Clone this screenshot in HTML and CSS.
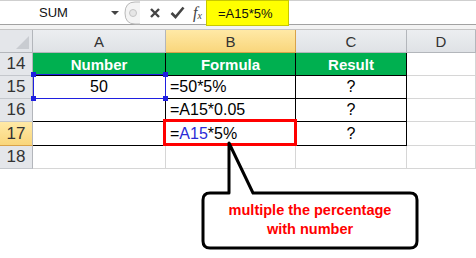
FILE: index.html
```html
<!DOCTYPE html>
<html lang="en">
<head>
<meta charset="UTF-8" />
<title>Percentage formula</title>
<link rel="stylesheet" href="styles.css">
</head>
<body>
<div class="fbar">
  <div class="namebox">
    <span class="name">SUM</span>
    <span class="dd"></span>
  </div>
  <div class="grip">
    <svg width="18" height="24" viewBox="0 0 18 24">
      <path d="M17 1 H12 Q2 1 2 12 Q2 23 12 23 H17" fill="#f4f4f4" stroke="#b9b9b9" />
      <circle cx="10" cy="12" r="3.5" fill="#e6e6e6" stroke="#c4c4c4" />
    </svg>
  </div>
  <div class="btns">
    <svg width="12" height="12" viewBox="0 0 12 12"><path d="M2 2 L10 10 M10 2 L2 10" stroke="#444" stroke-width="2.4" /></svg>
    <svg width="15" height="13" viewBox="0 0 15 13"><path d="M1.5 7 L5.5 11 L13.5 1.5" fill="none" stroke="#444" stroke-width="2.6" /></svg>
    <span class="fx">f<sub>x</sub></span>
  </div>
  <div class="finput">
    <span class="hl">=A15*5%</span>
  </div>
</div>
<div class="strip"></div>

<div class="sheet">
  <div class="corner"><span class="tri"></span></div>
  <div class="ch">A</div>
  <div class="ch on">B</div>
  <div class="ch">C</div>
  <div class="ch">D</div>

  <div class="rh">14</div>
  <div class="c t head">Number</div>
  <div class="c t head">Formula</div>
  <div class="c t head">Result</div>
  <div class="c"></div>

  <div class="rh">15</div>
  <div class="c t mid pick">50<span class="selbox"><i class="k1"></i><i class="k2"></i><i class="k3"></i><i class="k4"></i></span></div>
  <div class="c t">=50*5%</div>
  <div class="c t mid">?</div>
  <div class="c"></div>

  <div class="rh">16</div>
  <div class="c t"></div>
  <div class="c t">=A15*0.05</div>
  <div class="c t mid">?</div>
  <div class="c"></div>

  <div class="rh on">17</div>
  <div class="c t"></div>
  <div class="c t pick">=<span class="ref">A15</span>*5%<span class="redbox"></span></div>
  <div class="c t mid">?</div>
  <div class="c"></div>

  <div class="rh">18</div>
  <div class="c"></div>
  <div class="c"></div>
  <div class="c"></div>
  <div class="c"></div>
</div>

<div class="callout">
  <svg class="bubble" width="220" height="110" viewBox="0 0 220 110">
    <path d="M28 2 L52 52 H209 Q216 52 216 59 V100 Q216 107 209 107 H9 Q2 107 2 100 V59 Q2 52 9 52 H28 Z" fill="#fff" stroke="#000" stroke-width="3" stroke-linejoin="round" />
  </svg>
  <p class="note">multiple the percentage<br>with number</p>
</div>
</body>
</html>
```

FILE: styles.css
```css
html, body {
margin: 0;
padding: 0;
}

body {
width: 476px;
height: 258px;
overflow: hidden;
background: #fff;
font-family: 'Liberation Sans', Arial, sans-serif;
position: relative;
}

/* formula bar */
.fbar {
display: flex;
border-top: 1px solid #cfcfcf;
border-bottom: 1px solid #a2a2a2;
box-sizing: border-box;
height: 25px;
}

.namebox {
width: 123px;
display: flex;
align-items: center;
position: relative;
}

.name {
font-size: 13px;
color: #111;
margin-left: 39px;
}

.dd {
position: absolute;
left: 111px;
top: 10px;
border-left: 4px solid transparent;
border-right: 4px solid transparent;
border-top: 4px solid #444;
}

.grip {
width: 19px;
display: flex;
}

.btns {
width: 64px;
display: flex;
align-items: center;
gap: 9px;
padding-left: 7px;
box-sizing: border-box;
}

.fx {
font-family: 'Liberation Serif', serif;
font-style: italic;
font-size: 16px;
color: #444;
margin-left: -1px;
}

.fx sub {
font-size: 10px;
vertical-align: -1px;
}

.finput {
flex: 1;
display: flex;
}

.hl {
display: flex;
align-items: center;
width: 83px;
height: 26px;
margin-top: -1px;
box-sizing: border-box;
padding-left: 11px;
background: #ffff00;
border: 1px solid #c8c800;
font-size: 13px;
color: #111;
}

.strip {
height: 4px;
background: #f3f3f3;
border-bottom: 1px solid #c4c4c4;
}

/* sheet */
.sheet {
display: grid;
grid-template-columns: 33px 133px 130px 111px 1fr;
grid-template-rows: 23px 23px 23px 23px 24px 23px;
}

.sheet > div {
box-sizing: border-box;
border-right: 1px solid #d6d6d6;
border-bottom: 1px solid #d6d6d6;
display: flex;
align-items: center;
font-size: 16px;
color: #000;
}

.sheet .corner {
background: #e4e6ea;
border-right: 1px solid #b3b6bb;
border-bottom: 1px solid #b3b6bb;
position: relative;
}

.tri {
position: absolute;
right: 3px;
bottom: 3px;
border-left: 13px solid transparent;
border-bottom: 13px solid #c9ccd1;
}

.sheet .ch {
justify-content: center;
background: linear-gradient(#eceef1, #dfe2e6);
border-right: 1px solid #b3b6bb;
border-bottom: 1px solid #b3b6bb;
font-size: 15px;
color: #333;
}

.sheet .ch.on {
background: linear-gradient(#ffe9a6, #f9d67c);
border-right-color: #d9a34a;
border-bottom-color: #d9a34a;
}

.sheet .rh {
justify-content: center;
background: #e4e6ea;
border-right: 1px solid #b3b6bb;
border-bottom: 1px solid #c4c7cc;
color: #333;
font-size: 17px;
}

.sheet .rh.on {
background: linear-gradient(#ffe9a6, #f9d67c);
border-bottom-color: #d9a34a;
}

.sheet .t {
border-right: 1.5px solid #000;
border-bottom: 1.5px solid #000;
padding-left: 4px;
}

.sheet .head {
background: #00b050;
color: #fff;
font-weight: bold;
font-size: 15px;
justify-content: center;
padding-left: 0;
}

.sheet .mid {
justify-content: center;
padding-left: 0;
}

.ref {
color: #2b2bd6;
}

.pick {
position: relative;
}

.selbox {
position: absolute;
left: 0;
top: -2px;
right: -1px;
bottom: -1px;
border: 1px solid #1f1fe0;
}

.selbox i {
position: absolute;
width: 5px;
height: 5px;
background: #1f1fe0;
}

.selbox .k1 { left: -3px; top: -3px; }
.selbox .k2 { right: -3px; top: -3px; }
.selbox .k3 { left: -3px; bottom: -3px; }
.selbox .k4 { right: -3px; bottom: -3px; }

.redbox {
position: absolute;
left: -3px;
top: -3px;
right: -2px;
bottom: -1px;
border: 3px solid #ff0000;
}

/* annotation */
.callout {
position: absolute;
left: 201px;
top: 141px;
width: 220px;
height: 110px;
}

.bubble {
position: absolute;
left: 0;
top: 0;
}

.note {
position: relative;
margin: 0;
padding-top: 60px;
width: 218px;
text-align: center;
color: #ff0000;
font-weight: bold;
font-size: 14.5px;
line-height: 19px;
}
```
